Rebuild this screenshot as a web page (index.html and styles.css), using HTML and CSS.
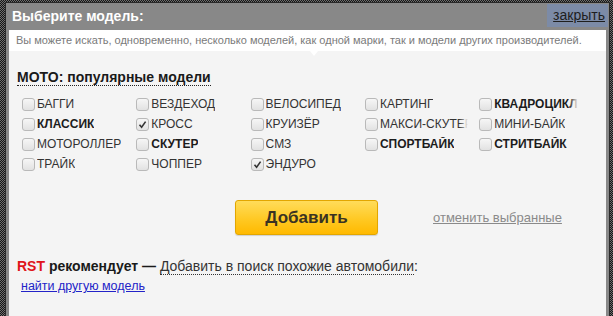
FILE: index.html
```html
<!DOCTYPE html>
<html lang="ru">
<head>
<meta charset="utf-8">
<title>Выберите модель</title>
<link rel="stylesheet" href="styles.css">
</head>
<body>
<div class="dialog">
  <div class="header">
    <div class="title">Выберите модель:</div>
    <a class="close" href="#">закрыть</a>
  </div>
  <div class="desc">Вы можете искать, одновременно, несколько моделей, как одной марки, так и модели других производителей.</div>
  <div class="content">
    <div class="heading">МОТО: популярные модели</div>
    <div class="grid">
      <label class="item"><span class="cb"></span><span class="lbl">БАГГИ</span></label>
      <label class="item"><span class="cb"></span><span class="lbl">ВЕЗДЕХОД</span></label>
      <label class="item"><span class="cb"></span><span class="lbl">ВЕЛОСИПЕД</span></label>
      <label class="item"><span class="cb"></span><span class="lbl">КАРТИНГ</span></label>
      <label class="item"><span class="cb"></span><span class="lbl bold fade">КВАДРОЦИКЛ</span></label>

      <label class="item"><span class="cb"></span><span class="lbl bold">КЛАССИК</span></label>
      <label class="item"><span class="cb checked"><svg viewBox="0 0 13 13" width="13" height="13"><path d="M3.5 6.8 L5.6 9.2 L9.6 3.6" fill="none" stroke="#333" stroke-width="1.6"/></svg></span><span class="lbl">КРОСС</span></label>
      <label class="item"><span class="cb"></span><span class="lbl">КРУИЗЁР</span></label>
      <label class="item"><span class="cb"></span><span class="lbl fade">МАКСИ-СКУТЕР</span></label>
      <label class="item"><span class="cb"></span><span class="lbl">МИНИ-БАЙК</span></label>

      <label class="item"><span class="cb"></span><span class="lbl">МОТОРОЛЛЕР</span></label>
      <label class="item"><span class="cb"></span><span class="lbl bold">СКУТЕР</span></label>
      <label class="item"><span class="cb"></span><span class="lbl">СМЗ</span></label>
      <label class="item"><span class="cb"></span><span class="lbl bold">СПОРТБАЙК</span></label>
      <label class="item"><span class="cb"></span><span class="lbl bold">СТРИТБАЙК</span></label>

      <label class="item"><span class="cb"></span><span class="lbl">ТРАЙК</span></label>
      <label class="item"><span class="cb"></span><span class="lbl">ЧОППЕР</span></label>
      <label class="item"><span class="cb checked"><svg viewBox="0 0 13 13" width="13" height="13"><path d="M3.5 6.8 L5.6 9.2 L9.6 3.6" fill="none" stroke="#333" stroke-width="1.6"/></svg></span><span class="lbl">ЭНДУРО</span></label>
    </div>
    <div class="actions">
      <button class="add" type="button">Добавить</button>
      <a class="cancel" href="#">отменить выбранные</a>
    </div>
    <div class="recommend"><span class="rst">RST</span> <b>рекомендует —</b> <span class="dotted">Добавить в поиск похожие автомобили</span>:</div>
    <div class="other"><a href="#">найти другую модель</a></div>
  </div>
</div>
</body>
</html>
```

FILE: styles.css
```css
html, body {
  margin: 0;
  padding: 0;
}
body {
  width: 613px;
  height: 316px;
  overflow: hidden;
  background: repeating-conic-gradient(#161616 0 25%, #6e6e6e 0 50%) 0 0 / 2px 2px;
  font-family: "Liberation Sans", Arial, sans-serif;
}
.dialog {
  margin: 3px 0 0 6px;
  width: 603px;
  height: 320px;
  box-sizing: border-box;
  padding: 0 3px 5px;
  background: #888888;
  box-shadow: 0 0 0 1px #2a2a2a;
  display: flex;
  flex-direction: column;
}
.header {
  height: 27px;
  display: flex;
  justify-content: space-between;
  align-items: flex-start;
}
.title {
  color: #fff;
  font-weight: bold;
  font-size: 14px;
  line-height: 27px;
  padding-left: 3px;
}
.close {
  margin-top: 1px;
  margin-right: -2px;
  height: 23px;
  line-height: 23px;
  padding: 0 3px 0 6px;
  background: #7c8ba7;
  color: #1e1e1e;
  font-size: 14px;
  text-decoration: underline;
}
.desc {
  position: relative;
  height: 21px;
  line-height: 21px;
  background: #fff;
  color: #7a7a7a;
  font-size: 11px;
  padding-left: 7px;
}
.desc::after {
  content: "";
  position: absolute;
  left: 301px;
  bottom: -5px;
  border-left: 4px solid transparent;
  border-right: 4px solid transparent;
  border-top: 5px solid #fff;
}
.content {
  flex: 1;
  background: #f4f4f4;
  padding: 17px 0 0 8px;
}
.heading {
  display: inline-block;
  font-size: 14px;
  font-weight: bold;
  line-height: 15px;
  color: #1a1a1a;
  border-bottom: 1px dotted #222;
}
.grid {
  margin: 8px 0 0 5px;
  display: grid;
  grid-template-columns: repeat(5, 114.3px);
  grid-auto-rows: 20px;
}
.item {
  display: flex;
  align-items: center;
  gap: 2px;
  font-size: 12px;
  color: #333;
}
.cb {
  width: 13px;
  height: 13px;
  box-sizing: border-box;
  border: 1px solid #b9b9b9;
  border-radius: 3px;
  background: linear-gradient(#f6f6f6, #e2e2e2);
  flex: none;
  position: relative;
}
.cb svg {
  position: absolute;
  left: -1px;
  top: -1px;
}
.lbl {
  position: relative;
  max-width: 88px;
  overflow: hidden;
  white-space: nowrap;
}
.lbl.bold {
  font-weight: bold;
  color: #1c1c1c;
}
.lbl.fade::after {
  content: "";
  position: absolute;
  right: 0;
  top: 0;
  bottom: 0;
  width: 9px;
  background: linear-gradient(to right, rgba(244,244,244,0), #f4f4f4);
}
.actions {
  margin-top: 26px;
  display: flex;
  align-items: center;
  padding-left: 218px;
}
.add {
  width: 143px;
  height: 35px;
  border: 1px solid #e2a600;
  border-radius: 3px;
  background: linear-gradient(#ffdc5a, #ffc71f 60%, #ffb900);
  box-shadow: 0 1px 1px rgba(0,0,0,0.15);
  font-family: "Liberation Sans", Arial, sans-serif;
  font-weight: bold;
  font-size: 17px;
  color: #3a3222;
  padding: 0;
}
.cancel {
  margin-left: 55px;
  font-size: 13px;
  color: #8a8a8a;
  text-decoration: underline;
}
.recommend {
  margin-top: 23px;
  font-size: 14px;
  line-height: 16px;
  color: #1a1a1a;
}
.rst {
  color: #e0151b;
  font-weight: bold;
}
.dotted {
  color: #333;
  border-bottom: 1px dotted #333;
}
.other {
  margin-top: 4px;
  padding-left: 4px;
  font-size: 12.5px;
  line-height: 16px;
}
.other a {
  color: #2323c8;
  text-decoration: underline;
}
```
